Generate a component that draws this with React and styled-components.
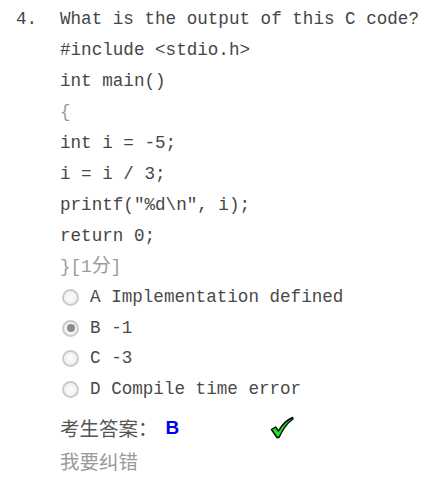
import React from 'react';
import styled, { createGlobalStyle } from 'styled-components';

const GlobalStyle = createGlobalStyle`
  body {
    margin: 0;
    background: #fff;
  }
`;

const mono = `"Liberation Mono", "Noto Sans CJK SC", monospace`;
const cjk = `"Noto Sans CJK SC", sans-serif`;

const Question = styled.div`
  display: grid;
  grid-template-columns: 60px 1fr;
  padding-top: 4px;
  font-family: ${mono};
  font-size: 17.6px;
  line-height: 31px;
  color: #464646;
`;

const Number = styled.div`
  padding-left: 16px;
`;

const Body = styled.div`
  display: flex;
  flex-direction: column;
`;

const Line = styled.div`
  height: 31px;
  white-space: pre;
  color: ${(p) => (p.$light ? '#9a9a9a' : 'inherit')};
`;

const Han = styled.span`
  font-family: ${cjk};
  font-size: 19px;
  line-height: 1;
`;

const Options = styled.div`
  display: flex;
  flex-direction: column;
  margin-top: -1px;
`;

const Option = styled.label`
  display: flex;
  align-items: center;
  height: 30.7px;
  color: #4a4a4a;
  white-space: pre;
`;

const Radio = styled.span`
  width: 17px;
  height: 17px;
  margin: 0 11px 0 2px;
  border-radius: 50%;
  box-sizing: border-box;
  border: 2px solid #cbcbcb;
  background: radial-gradient(circle, #fcfcfc 0%, #ededed 100%);
  display: flex;
  align-items: center;
  justify-content: center;

  &::after {
    content: '';
    width: 8px;
    height: 8px;
    border-radius: 50%;
    background: ${(p) => (p.$checked ? '#8c8c8c' : 'transparent')};
  }
`;

const Answer = styled.div`
  display: flex;
  align-items: center;
  margin-top: 6px;
  height: 34px;
  font-family: ${cjk};
  font-size: 19.5px;
  color: #555;
`;

const Picked = styled.span`
  font-family: "Liberation Sans", Arial, sans-serif;
  font-weight: bold;
  font-size: 19px;
  color: #0000ee;
  margin-left: 8px;
  width: 104px;
`;

const Report = styled.div`
  height: 32px;
  display: flex;
  align-items: center;
  font-family: ${cjk};
  font-size: 19.5px;
  color: #9a9a9a;
`;

const Check = () => (
  <svg width="24" height="23" viewBox="0 0 24 23">
    <path
      d="M1.5 13.5 L5.5 11 L8.5 15 C12 9 16.5 4 22.5 1.5 L23 3 C17 7 12.5 14 9 21.5 L7 21.5 Z"
      fill="#22e422"
      stroke="#000"
      strokeWidth="1.4"
      strokeLinejoin="round"
    />
  </svg>
);

const options = [
  { key: 'A', text: 'Implementation defined' },
  { key: 'B', text: '-1', checked: true },
  { key: 'C', text: '-3' },
  { key: 'D', text: 'Compile time error' },
];

const App = () => {
  return (
    <>
      <GlobalStyle />
      <Question>
        <Number>4.</Number>
        <Body>
          <Line>What is the output of this C code?</Line>
          <Line>#include &lt;stdio.h&gt;</Line>
          <Line>int main()</Line>
          <Line $light>{'{'}</Line>
          <Line>int i = -5;</Line>
          <Line>i = i / 3;</Line>
          <Line>printf("%d\n", i);</Line>
          <Line>return 0;</Line>
          <Line $light>
            {'}[1'}
            <Han>分</Han>
            {']'}
          </Line>
          <Options>
            {options.map((o) => (
              <Option key={o.key}>
                <Radio $checked={o.checked} />
                {o.key} {o.text}
              </Option>
            ))}
          </Options>
          <Answer>
            考生答案：<Picked>B</Picked>
            <Check />
          </Answer>
          <Report>我要纠错</Report>
        </Body>
      </Question>
    </>
  );
};

export default App;
